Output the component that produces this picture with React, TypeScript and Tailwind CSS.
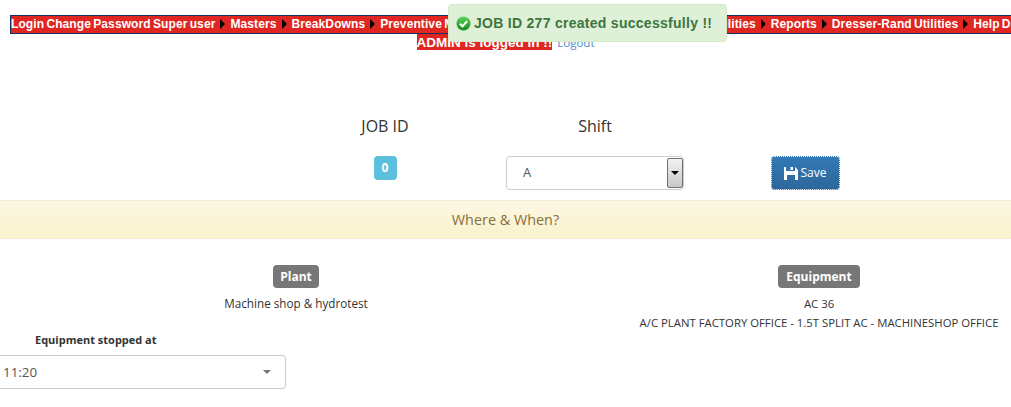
import React from 'react';

const menuItems = ['Masters', 'BreakDowns', 'Preventive Maintenance Plan', 'Maintenance Work Orders Utilities', 'Reports', 'Dresser-Rand Utilities', 'Help Drawings'];

const Arrow = () => (
  <span className="inline-block mx-[5px] w-0 h-0 border-y-[5px] border-y-transparent border-l-[5px] border-l-black align-[-1px]" />
);

const App: React.FC = () => {
  return (
    <div className="relative w-[1011px] h-[407px] overflow-hidden bg-white font-['Open_Sans',sans-serif] text-[#333]">
      {/* top menu */}
      <div className="pt-[15px] pl-[10px]">
        <div className="w-[1100px] h-[19px] bg-[#df2620] border border-[#12305f] font-['Liberation_Sans',sans-serif] font-bold text-[12px] leading-[17px] tracking-[0.1px] [word-spacing:-1.2px] text-white whitespace-nowrap overflow-hidden">
          <span>Login Change Password Super user</span>
          {menuItems.map((item) => (
            <span key={item}>
              <Arrow />
              {item}
            </span>
          ))}
        </div>
      </div>

      <div className="flex justify-center items-start h-[17px]">
        <span className="bg-[#df2620] text-white font-['Liberation_Sans',sans-serif] font-bold text-[13.5px] leading-[18px] h-[16px] overflow-hidden">ADMIN is logged in !!</span>
        <span className="ml-[5px] text-[11.5px] leading-[17px] text-[#428bca]">Logout</span>
      </div>

      {/* toast */}
      <div className="absolute left-[448px] top-[4px] w-[279px] h-[38px] flex items-center gap-[3px] pl-[7px] bg-[#dff0d8] border border-[#d6e9c6] rounded-[4px] font-['Liberation_Sans',sans-serif] font-bold text-[14px] text-[#3c763d] tracking-[0.28px]">
        <svg width="15" height="15" viewBox="0 0 16 16">
          <defs>
            <linearGradient id="ok" x1="0" y1="0" x2="0" y2="1">
              <stop offset="0" stopColor="#5fd35f" />
              <stop offset="1" stopColor="#178a17" />
            </linearGradient>
          </defs>
          <circle cx="8" cy="8" r="7.5" fill="url(#ok)" />
          <path d="M4.2 8.2 7 11l4.8-5.4" fill="none" stroke="#fff" strokeWidth="2.2" />
        </svg>
        <span>JOB ID 277 created successfully !!</span>
      </div>

      {/* job row */}
      <div className="mt-[65px] pl-[280px] grid grid-cols-[210px_210px_210px]">
        <div className="text-center text-[16px] leading-[20px]">JOB ID</div>
        <div className="text-center text-[16px] leading-[20px]">Shift</div>
        <div />
        <div className="mt-[20px] flex justify-center">
          <span className="w-[23px] h-[24px] rounded-[4px] bg-[#5bc0de] text-white text-[12px] font-bold flex items-center justify-center">0</span>
        </div>
        <div className="mt-[20px] flex justify-center">
          <div className="w-[178px] h-[34px] flex items-center justify-between bg-white border border-[#ccc] rounded-[4px] text-[13px] text-[#555] pl-[16px]">
            <span>A</span>
            <span className="w-[16px] h-[30px] bg-gradient-to-b from-[#f2f2f2] to-[#c8c8c8] border border-[#707070] rounded-[2px] flex items-center justify-center">
              <span className="w-0 h-0 border-x-[4px] border-x-transparent border-t-[4px] border-t-black" />
            </span>
          </div>
        </div>
        <div className="mt-[20px] flex justify-center">
          <button className="w-[69px] h-[34px] flex items-center justify-center gap-[3px] bg-gradient-to-b from-[#337ab7] to-[#2b669a] rounded-[4px] outline-1 outline-dotted outline-white -outline-offset-1 text-white text-[12px]">
            <svg width="14" height="13" viewBox="0 0 14 13" fill="#fff">
              <path d="M0 0h2v4h9V0l3 3v10H0zM6.5 0h2.5v3H6.5zM3 8v5h8V8z" fillRule="evenodd" />
            </svg>
            Save
          </button>
        </div>
      </div>

      {/* panel heading */}
      <div className="mt-[10px] h-[39px] flex items-center justify-center bg-gradient-to-b from-[#fcf8e3] to-[#faf2cc] border-y border-[#faebcc] text-[14.4px] text-[#8a6d3b]">
        Where &amp; When?
      </div>

      <div className="mt-[26px] flex">
        <div className="w-[592px] flex flex-col items-center">
          <span className="h-[23px] px-[7px] rounded-[4px] bg-[#777] text-white font-bold text-[12px] leading-[23px]">Plant</span>
          <span className="mt-[5px] text-[11.7px] leading-[20px]">Machine shop &amp; hydrotest</span>
        </div>
        <div className="w-[384px] ml-[35px] flex flex-col items-center text-[11.35px]">
          <span className="h-[23px] px-[8px] rounded-[4px] bg-[#777] text-white font-bold text-[12px] leading-[23px]">Equipment</span>
          <span className="mt-[6px] leading-[19px]">AC 36</span>
          <span className="leading-[19px] whitespace-nowrap">A/C PLANT FACTORY OFFICE - 1.5T SPLIT AC - MACHINESHOP OFFICE</span>
        </div>
      </div>

      {/* stopped at */}
      <div className="mt-0 w-[286px]">
        <div className="pl-[35px] text-[11px] font-bold leading-[16px]">Equipment stopped at</div>
        <div className="mt-[7px] h-[34px] flex items-center justify-between pl-[3px] pr-[14px] border border-l-0 border-[#ccc] rounded-r-[4px] text-[13.4px] text-[#555]">
          <span>11:20</span>
          <span className="w-0 h-0 border-x-[4px] border-x-transparent border-t-[4px] border-t-[#777]" />
        </div>
      </div>
    </div>
  );
};

export default App;
